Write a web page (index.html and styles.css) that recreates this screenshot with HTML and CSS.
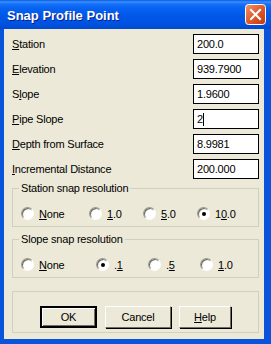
FILE: index.html
```html
<html>
  <head>
    <link rel="stylesheet" href="styles.css">
  </head>
  <body>
    <div class="window">
      <div class="titlebar">
        <span class="title">Snap Profile Point</span>
        <span class="close">
          <svg width="21" height="21" viewBox="0 0 21 21">
            <defs>
              <linearGradient id="red" x1="0" y1="0" x2="1" y2="1">
                <stop offset="0" stop-color="#F0956F"/>
                <stop offset="0.5" stop-color="#DF5A2C"/>
                <stop offset="1" stop-color="#C2380F"/>
              </linearGradient>
            </defs>
            <rect x="0.5" y="0.5" width="20" height="20" rx="3" fill="url(#red)" stroke="#fff"/>
            <path d="M6 6 L15 15 M15 6 L6 15" stroke="#fff" stroke-width="2" stroke-linecap="square"/>
          </svg>
        </span>
      </div>
      <div class="client">
        <div class="fields">
          <div class="row"><span><u>S</u>tation</span><span class="box">200.0</span></div>
          <div class="row"><span><u>E</u>levation</span><span class="box">939.7900</span></div>
          <div class="row"><span>S<u>l</u>ope</span><span class="box">1.9600</span></div>
          <div class="row"><span><u>P</u>ipe Slope</span><span class="box">2<span class="caret"></span></span></div>
          <div class="row"><span><u>D</u>epth from Surface</span><span class="box">8.9981</span></div>
          <div class="row"><span><u>I</u>ncremental Distance</span><span class="box">200.000</span></div>
        </div>

        <fieldset class="group">
          <legend>Station snap resolution</legend>
          <div class="radios station">
            <span class="opt"><span class="radio"></span><span><u>N</u>one</span></span>
            <span class="opt"><span class="radio"></span><span><u>1</u>.0</span></span>
            <span class="opt"><span class="radio"></span><span><u>5</u>.0</span></span>
            <span class="opt"><span class="radio on"></span><span>1<u>0</u>.0</span></span>
          </div>
        </fieldset>

        <fieldset class="group">
          <legend>Slope snap resolution</legend>
          <div class="radios slope">
            <span class="opt"><span class="radio"></span><span><u>N</u>one</span></span>
            <span class="opt"><span class="radio on"></span><span>.<u>1</u></span></span>
            <span class="opt"><span class="radio"></span><span>.<u>5</u></span></span>
            <span class="opt"><span class="radio"></span><span><u>1</u>.0</span></span>
          </div>
        </fieldset>

        <div class="frame">
          <span class="btn default">OK</span>
          <span class="btn cancel">Cancel</span>
          <span class="btn help"><u>H</u>elp</span>
        </div>
      </div>
    </div>
  </body>
</html>
```

FILE: styles.css
```css
body {
  margin: 0;
  font-family: "Liberation Sans", Arial, sans-serif;
  font-size: 11px;
  letter-spacing: -0.2px;
}

.window {
  width: 271px;
  height: 344px;
  box-sizing: border-box;
  background: #0A54DC;
  display: flex;
  flex-direction: column;
}

.titlebar {
  height: 29px;
  flex: none;
  display: flex;
  align-items: center;
  padding-left: 7px;
  background: linear-gradient(#0A5AE8 0, #3C8FFB 2px, #1472F8 4px, #0862F2 8px, #0058E8 16px, #0052DF 24px, #0049D0 29px);
}

.title {
  color: #fff;
  font-weight: bold;
  font-size: 13px;
  letter-spacing: 0;
  text-shadow: 1px 1px #0A1E8C;
  position: relative;
  top: 1px;
}

.close {
  margin-left: auto;
  margin-right: 5px;
  height: 21px;
}

.client {
  flex: 1;
  margin: 0 7px 5px 4px;
  background: #ECE9D8;
  padding: 5px 5px 0 8px;
}

.fields {
  display: flex;
  flex-direction: column;
  gap: 5px;
}

.row {
  height: 20px;
  display: flex;
  align-items: center;
  justify-content: space-between;
}

.box {
  width: 66px;
  height: 20px;
  box-sizing: border-box;
  background: #fff;
  border: 1px solid #000;
  padding-left: 3px;
  display: flex;
  align-items: center;
}

.caret {
  width: 1px;
  height: 13px;
  background: #000;
}

.group {
  margin: 2px 0 0 0;
  padding: 12px 0 6px 0;
  border: 1px solid #D0D0BF;
  min-inline-size: 0;
}

.group + .group {
  margin-top: 5px;
}

.group legend {
  line-height: 14px;
  padding: 0 2px;
  margin-left: 6px;
}

.radios {
  display: grid;
  height: 13px;
  padding-left: 8px;
  align-items: center;
}

.radios.station {
  grid-template-columns: 68px 54px 54px auto;
}

.radios.slope {
  grid-template-columns: 75px 52px 52px auto;
}

.opt {
  display: flex;
  align-items: center;
  gap: 5px;
}

.radio {
  width: 13px;
  height: 13px;
  box-sizing: border-box;
  border-radius: 50%;
  border: 1px solid;
  border-color: #9C9A8E #FFFFFF #FFFFFF #9C9A8E;
  background: radial-gradient(circle at 65% 65%, #FFFFFF 0, #FFFFFF 45%, #E2E0D5 100%);
  box-shadow: inset 1px 1px #6B6A63;
  display: flex;
  align-items: center;
  justify-content: center;
}

.radio.on::after {
  content: "";
  width: 4px;
  height: 4px;
  border-radius: 50%;
  background: #000;
}

.frame {
  margin-top: 13px;
  border: 1px solid #D0D0BF;
  padding: 14px 0 4px 27px;
  display: flex;
  gap: 8px;
}

.btn {
  height: 22px;
  box-sizing: border-box;
  background: #ECE9D8;
  border: 1px solid;
  border-color: #FFFFFF #716F64 #716F64 #FFFFFF;
  box-shadow: 1px 1px #000;
  display: flex;
  align-items: center;
  justify-content: center;
  width: 66px;
}

.btn.default {
  width: 57px;
  border: 2px solid;
  border-color: #000;
  box-shadow: inset 1px 1px #fff, inset -1px -1px #716F64;
}

.btn.help {
  width: 52px;
}
```
